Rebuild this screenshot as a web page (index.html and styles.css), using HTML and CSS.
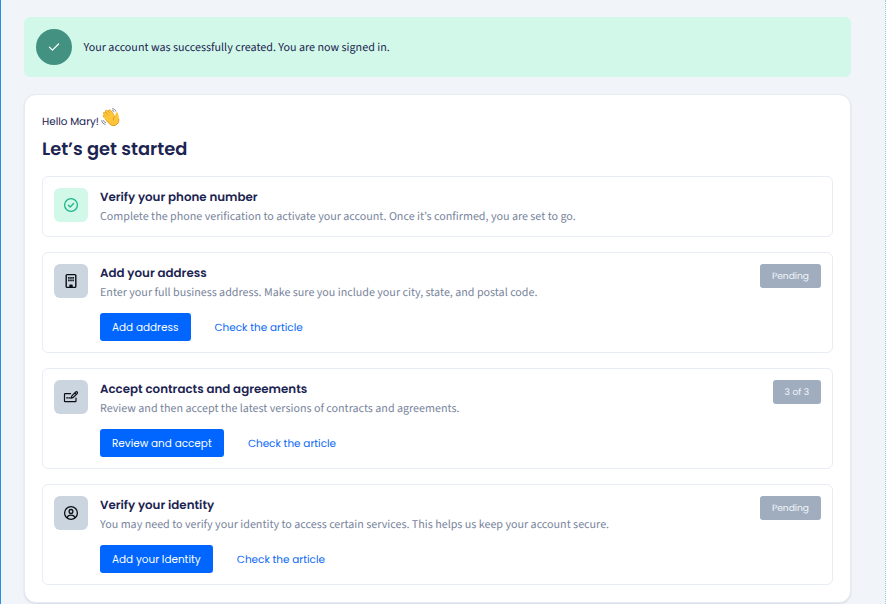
FILE: index.html
```
<!DOCTYPE html>
<html lang="en">
<head>
    <meta charset="UTF-8">
    <title>Let’s get started</title>
    <link rel="stylesheet" href="styles.css">
</head>
<body>
    <div class="page">
        <div class="alert">
            <span class="alert-icon">
                <svg width="12" height="10" viewBox="0 0 12 10" fill="none" stroke="#fff" stroke-width="1.2" stroke-linecap="round" stroke-linejoin="round"><path d="M1.4 5.2 4.4 8.2 10.6 2"/></svg>
            </span>
            <p class="alert-text">Your account was successfully created. You are now signed in.</p>
        </div>

        <div class="card">
            <div class="hello">
                <span>Hello Mary!</span>
                <svg class="wave" width="19" height="19" viewBox="0 0 19 19" fill="none" stroke-linecap="round" stroke-linejoin="round">
                    <path d="M7 11.5 3.2 8M8.2 9.4 3.6 5.2M10 8 5.6 3.4M12 7.4 8.6 3" stroke="#dd9216" stroke-width="2.9"/>
                    <path d="M7 11.5 3.2 8M8.2 9.4 3.6 5.2M10 8 5.6 3.4M12 7.4 8.6 3" stroke="#fdc83c" stroke-width="2"/>
                    <path d="M4.8 9.8 12.2 6.3 14.3 8.2C14.9 7 14.3 5.3 15.2 4.4 16.1 3.8 16.9 4.6 17.1 5.8L18.1 11C18.4 13.6 17 16.2 14.5 17.4 12.3 18.4 10.3 17.9 8.5 16L4.2 11.8C3.6 11 4 9.8 4.8 9.8Z" fill="#fdc63a"/>
                    <path d="M17.9 11.5C18 14 16.8 16.2 14.4 17.2 12.3 18 10.4 17.5 8.7 15.8L5 12.2M14.2 8.2C12.6 9.1 12 10.4 12.5 12" stroke="#e2951c" stroke-width=".9"/>
                    <path d="M.8 12.6C1 14.7 2.2 16 4.1 16.3M2.6 12.6C2.8 13.7 3.6 14.4 4.6 14.6M11.5 .8C13.2 .8 14.4 1.6 14.9 3.1M11.4 2.6C12.3 2.7 12.9 3.1 13.2 3.8" stroke="#6d7783" stroke-width=".9"/>
                </svg>
            </div>
            <h1>Let’s get started</h1>

            <div class="steps">
                <div class="step">
                    <span class="step-icon done">
                        <svg width="16" height="16" viewBox="0 0 16 16" fill="none" stroke="#1cb58a" stroke-width="1.3" stroke-linecap="round" stroke-linejoin="round"><circle cx="8" cy="8" r="6.4"/><path d="M5.4 8.3 7.2 10 10.6 6.5"/></svg>
                    </span>
                    <div class="step-body">
                        <h2>Verify your phone number</h2>
                        <p>Complete the phone verification to activate your account. Once it’s confirmed, you are set to go.</p>
                    </div>
                </div>

                <div class="step">
                    <span class="step-icon">
                        <svg width="16" height="16" viewBox="0 0 16 16" fill="none" stroke="#0b0f14" stroke-width="1.4" stroke-linejoin="round"><rect x="3.2" y="1.6" width="9.6" height="12.8" rx="1"/><path d="M7 14.2V12.2H9V14.2" fill="#0b0f14"/><path d="M5.1 4.8H6.7M7.2 4.8H8.8M9.3 4.8H10.9M5.1 7.4H6.7M7.2 7.4H8.8M9.3 7.4H10.9" stroke-width="1.7"/></svg>
                    </span>
                    <div class="step-body">
                        <h2>Add your address</h2>
                        <p>Enter your full business address. Make sure you include your city, state, and postal code.</p>
                        <div class="actions">
                            <button class="button">Add address</button>
                            <a href="#">Check the article</a>
                        </div>
                    </div>
                    <span class="badge">Pending</span>
                </div>

                <div class="step">
                    <span class="step-icon">
                        <svg width="16" height="16" viewBox="0 0 16 16" fill="none" stroke="#0b0f14" stroke-width="1.2" stroke-linecap="round" stroke-linejoin="round"><path d="M7.6 4.7H2.2Q1.5 4.7 1.5 5.4V12Q1.5 12.7 2.2 12.7H12.3Q13 12.7 13 12V9"/><path d="M3.7 8.9H5M6.2 8.9H7.3"/><path d="M8.2 9.2 8.9 6.9 12.7 3C13.8 2.1 15.1 3.4 14.2 4.5L10.4 8.4ZM11.7 4 13.2 5.5"/></svg>
                    </span>
                    <div class="step-body">
                        <h2>Accept contracts and agreements</h2>
                        <p>Review and then accept the latest versions of contracts and agreements.</p>
                        <div class="actions">
                            <button class="button">Review and accept</button>
                            <a href="#">Check the article</a>
                        </div>
                    </div>
                    <span class="badge">3 of 3</span>
                </div>

                <div class="step">
                    <span class="step-icon">
                        <svg width="16" height="16" viewBox="0 0 16 16" fill="none" stroke="#0b0f14" stroke-width="1.3" stroke-linecap="round"><circle cx="8" cy="8" r="6.4"/><circle cx="8" cy="6.4" r="1.9"/><path d="M4.2 12.7C4.7 10.3 6.5 10.2 8 10.2S11.3 10.3 11.8 12.7"/></svg>
                    </span>
                    <div class="step-body">
                        <h2>Verify your identity</h2>
                        <p>You may need to verify your identity to access certain services. This helps us keep your account secure.</p>
                        <div class="actions">
                            <button class="button">Add your Identity</button>
                            <a href="#">Check the article</a>
                        </div>
                    </div>
                    <span class="badge">Pending</span>
                </div>
            </div>
        </div>
    </div>
</body>
</html>
```
FILE: styles.css
```
* {
    box-sizing: border-box;
}
body {
    margin: 0;
    background: #f1f5f9;
    color: #1c2451;
    font-family: Poppins, Inter, sans-serif;
    text-rendering: geometricPrecision;
}
h1, h2, p {
    margin: 0;
    white-space: nowrap;
}
.page {
    height: 604px;
    overflow: hidden;
    padding: 17px 34px 0 23px;
    border-left: 1px solid #2590ea;
    border-right: 1px dotted #9bcbe3;
}
.alert {
    display: flex;
    align-items: center;
    height: 60px;
    padding: 0 12px;
    border-radius: 6px;
    background: #d2f8e9;
}
.alert-icon {
    display: flex;
    align-items: center;
    justify-content: center;
    width: 36px;
    height: 36px;
    margin-right: 11.5px;
    border-radius: 50%;
    background: #439180;
}
.alert-text, .step-body p {
    font-family: "Source Sans Pro", "Source Sans 3", "Noto Sans CJK JP", sans-serif;
    font-feature-settings: "ss01";
    font-size: 12px;
    line-height: 18px;
}
.alert-text {
    padding-top: 2px;
    font-size: 12.03px;
}
.card {
    height: 509px;
    margin-top: 17px;
    padding: 13px 17px 0;
    border: 1px solid #e6ebf2;
    border-radius: 12px;
    background: #fff;
    box-shadow: 0 1px 2px rgba(30, 50, 90, 0.13);
}
.hello {
    display: flex;
    height: 22px;
    font-size: 10.4px;
    line-height: 27px;
}
.wave {
    margin-left: 2.5px;
}
h1 {
    height: 26px;
    margin-top: 6px;
    font-size: 17.85px;
    font-weight: 600;
    line-height: 28px;
}
.steps {
    display: flex;
    flex-direction: column;
    gap: 15px;
    margin-top: 14px;
}
.step {
    display: flex;
    align-items: flex-start;
    height: 101px;
    padding: 11px;
    border: 1px solid #e8ecf5;
    border-radius: 6px;
}
.step:first-child {
    height: 61px;
}
.step-icon {
    display: flex;
    align-items: center;
    justify-content: center;
    width: 34px;
    height: 34px;
    margin-right: 12px;
    border-radius: 6px;
    background: #cbd5e0;
}
.step-icon.done {
    background: #d2f8e9;
}
.step-body {
    flex: 1;
}
h2 {
    font-size: 11.85px;
    font-weight: 600;
    line-height: 20px;
}
.step-body p {
    color: #78849c;
}
.actions {
    display: flex;
    align-items: center;
    gap: 24px;
    height: 28px;
    margin-top: 11px;
    font-size: 10.45px;
}
.actions a {
    padding-top: 1px;
    color: #0967f5;
    text-decoration: none;
}
.button {
    height: 28px;
    padding: 1px 12.2px 0 12px;
    border: none;
    border-radius: 3px;
    background: #0066ff;
    color: #fff;
    font: inherit;
}
.badge {
    height: 24px;
    padding: 0 12px;
    border-radius: 3px;
    background: #a0adbf;
    color: #f3f6fa;
    font-size: 9.1px;
    line-height: 25px;
}
```
